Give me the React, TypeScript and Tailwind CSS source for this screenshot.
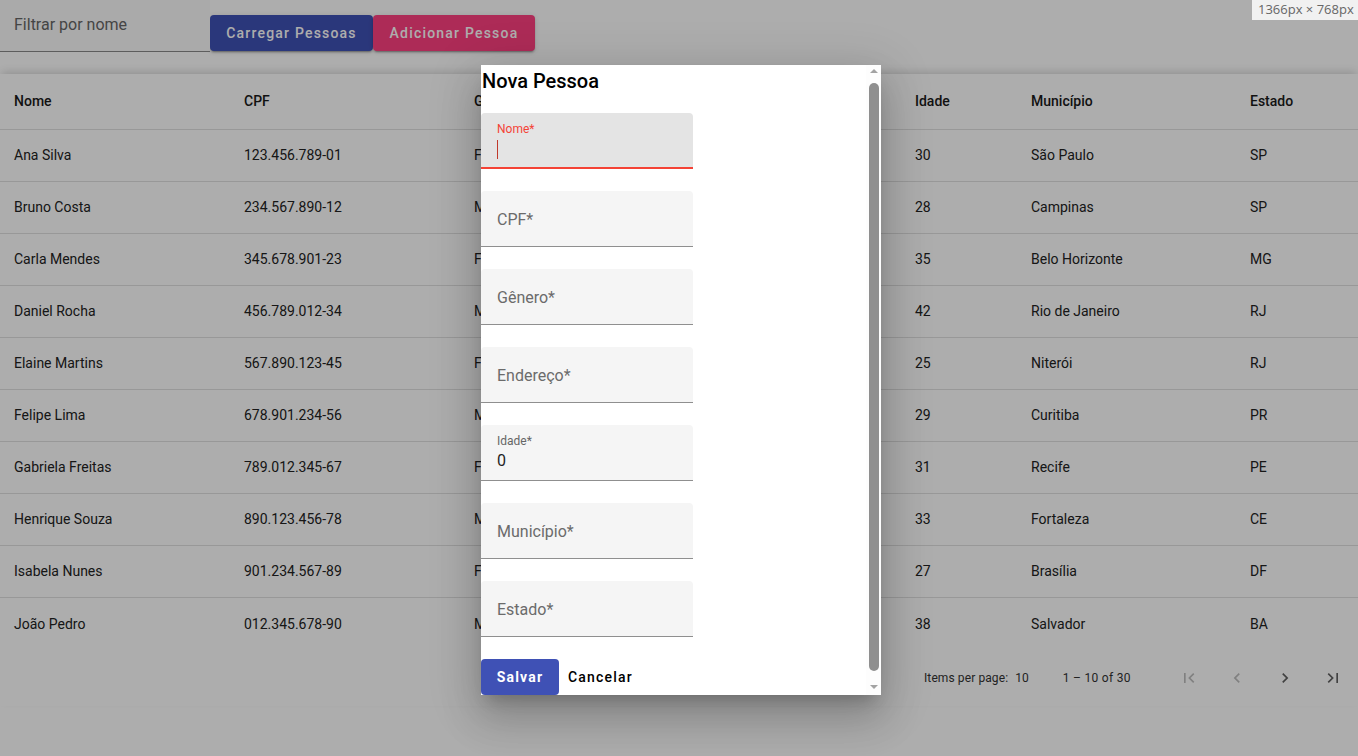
import React from "react";

const rows = [
  ["Ana Silva", "123.456.789-01", "Feminino", "Rua das Flores, 100", "30", "São Paulo", "SP"],
  ["Bruno Costa", "234.567.890-12", "Masculino", "Av. Brasil, 200", "28", "Campinas", "SP"],
  ["Carla Mendes", "345.678.901-23", "Feminino", "Rua Bahia, 300", "35", "Belo Horizonte", "MG"],
  ["Daniel Rocha", "456.789.012-34", "Masculino", "Rua Leblon, 400", "42", "Rio de Janeiro", "RJ"],
  ["Elaine Martins", "567.890.123-45", "Feminino", "Rua Icaraí, 500", "25", "Niterói", "RJ"],
  ["Felipe Lima", "678.901.234-56", "Masculino", "Rua XV, 600", "29", "Curitiba", "PR"],
  ["Gabriela Freitas", "789.012.345-67", "Feminino", "Rua Boa Vista, 700", "31", "Recife", "PE"],
  ["Henrique Souza", "890.123.456-78", "Masculino", "Av. Beira Mar, 800", "33", "Fortaleza", "CE"],
  ["Isabela Nunes", "901.234.567-89", "Feminino", "Eixo Monumental, 900", "27", "Brasília", "DF"],
  ["João Pedro", "012.345.678-90", "Masculino", "Rua Chile, 1000", "38", "Salvador", "BA"],
];

const headers = ["Nome", "CPF", "Gênero", "Endereço", "Idade", "Município", "Estado"];
const cols = "grid grid-cols-[230px_230px_126px_315px_116px_219px_108px] pl-[14px]";

function Field({ label, value, focused }: { label: string; value?: string; focused?: boolean }) {
  const floated = focused || value !== undefined;
  return (
    <div
      className={`relative h-[56px] w-[212px] rounded-t-[4px] ${
        focused ? "bg-[#e4e4e4] border-b-2 border-[#f44336]" : "bg-[#f5f5f5] border-b border-[#8f8f8f]"
      }`}
    >
      {floated ? (
        <>
          <div
            className={`absolute left-[16px] top-[9px] text-[12px] leading-[14px] ${
              focused ? "text-[#f44336]" : "text-[#666666]"
            }`}
          >
            {label}
          </div>
          {focused ? (
            <div className="absolute left-[16px] top-[27px] h-[19px] w-px bg-[#c0392b]" />
          ) : (
            <div className="absolute left-[16px] top-[26px] text-[16px] leading-[20px] text-[#1f1f1f]">{value}</div>
          )}
        </>
      ) : (
        <div className="absolute left-[16px] top-0 flex h-full items-center pt-[3px] text-[16px] text-[#6b6b6b]">
          {label}
        </div>
      )}
    </div>
  );
}

function PagIcon({ d, disabled }: { d: string; disabled?: boolean }) {
  return (
    <div className="flex h-[48px] w-[48px] shrink-0 items-center justify-center">
      <svg width="20" height="20" viewBox="0 0 24 24" fill={disabled ? "rgba(0,0,0,0.26)" : "rgba(0,0,0,0.62)"}>
        <path d={d} />
      </svg>
    </div>
  );
}

export default function App() {
  return (
    <div
      className="relative h-[756px] w-[1358px] overflow-hidden bg-white text-[#212121]"
      style={{ fontFamily: "Roboto, 'Noto Sans', sans-serif" }}
    >
      {/* top bar */}
      <div className="flex items-start">
        <div className="relative h-[52px] w-[210px] border-b border-[#8a8a8a] bg-[#fbfbfb]">
          <div className="absolute left-[14px] top-[14px] text-[16px] leading-[22px] text-[#666666]">Filtrar por nome</div>
        </div>
        <div className="mt-[15px] flex">
          <button className="h-[36px] w-[163px] rounded-[4px] bg-[#3f51b5] text-[14px] font-medium tracking-[1.2px] text-white shadow-[0_3px_1px_-2px_rgba(0,0,0,0.2),0_2px_2px_0_rgba(0,0,0,0.14),0_1px_5px_0_rgba(0,0,0,0.12)]">
            Carregar Pessoas
          </button>
          <button className="h-[36px] w-[162px] rounded-[4px] bg-[#ff4081] text-[14px] font-medium tracking-[1.2px] text-white shadow-[0_3px_1px_-2px_rgba(0,0,0,0.2),0_2px_2px_0_rgba(0,0,0,0.14),0_1px_5px_0_rgba(0,0,0,0.12)]">
            Adicionar Pessoa
          </button>
        </div>
      </div>

      {/* table */}
      <div className="mt-[22px] bg-white shadow-[0_-4px_8px_-2px_rgba(0,0,0,0.16)]">
        <div className={`${cols} h-[56px] items-center border-b border-[#e0e0e0] text-[14px] font-medium text-[#1a1a1a]`}>
          {headers.map((h) => (
            <div key={h}>{h}</div>
          ))}
        </div>
        {rows.map((r, i) => (
          <div
            key={i}
            className={`${cols} h-[52px] items-center text-[14px] text-[#222222] ${
              i < rows.length - 1 ? "border-b border-[#e0e0e0]" : ""
            }`}
          >
            {r.map((c, j) => (
              <div key={j} className="whitespace-nowrap">
                {c}
              </div>
            ))}
          </div>
        ))}
        <div className="flex h-[56px] items-center whitespace-nowrap text-[12px] text-[#333333]">
          <div className="ml-[924px] shrink-0 tracking-[0.1px]">Items per page:</div>
          <div className="ml-[7px] shrink-0">10</div>
          <div className="ml-[34px] shrink-0 tracking-[0.3px]">1 – 10 of 30</div>
          <div className="ml-[34px] flex shrink-0">
            <PagIcon disabled d="M18.41 16.59L13.82 12l4.59-4.59L17 6l-6 6 6 6zM6 6h2v12H6z" />
            <PagIcon disabled d="M15.41 7.41L14 6l-6 6 6 6 1.41-1.41L10.83 12z" />
            <PagIcon d="M10 6L8.59 7.41 13.17 12l-4.58 4.59L10 18l6-6z" />
            <PagIcon d="M5.59 7.41L10.18 12l-4.59 4.59L7 18l6-6-6-6zM16 6h2v12h-2z" />
          </div>
        </div>
      </div>

      {/* backdrop */}
      <div className="absolute inset-0 bg-black/[0.32]" />

      {/* dialog */}
      <div className="absolute left-[481px] top-[65px] flex h-[630px] w-[400px] overflow-hidden bg-white shadow-[0_11px_15px_-7px_rgba(0,0,0,0.2),0_24px_38px_3px_rgba(0,0,0,0.14),0_9px_46px_8px_rgba(0,0,0,0.12)]">
        <div className="flex flex-1 flex-col">
          <div className="h-[32px] pl-[1px] text-[20px] font-medium leading-[32px] text-black">Nova Pessoa</div>
          <div className="mt-[16px] flex flex-col gap-[22px]">
            <Field label="Nome*" focused />
            <Field label="CPF*" />
            <Field label="Gênero*" />
            <Field label="Endereço*" />
            <Field label="Idade*" value="0" />
            <Field label="Município*" />
            <Field label="Estado*" />
          </div>
          <div className="mt-[22px] flex items-center">
            <button className="h-[36px] w-[78px] rounded-[4px] bg-[#3f51b5] text-[14px] font-bold tracking-[1.2px] text-white">
              Salvar
            </button>
            <button className="ml-[9px] h-[36px] text-[14px] font-medium tracking-[1.2px] text-black">Cancelar</button>
          </div>
        </div>
        {/* scrollbar */}
        <div className="flex w-[15px] flex-col items-center bg-[#fdfdfd]">
          <div className="mt-[4px] h-0 w-0 border-x-[4px] border-b-[4px] border-x-transparent border-b-[#a3a3a3]" />
          <div className="mt-[10px] h-[588px] w-[10px] rounded-full bg-[#8f8f8f]" />
          <div className="mt-[14px] h-0 w-0 border-x-[4px] border-t-[4px] border-x-transparent border-t-[#a3a3a3]" />
        </div>
      </div>

      {/* size badge */}
      <div className="absolute right-0 top-0 flex h-[20px] w-[106px] items-center bg-[#f1f1f1] pl-[6px] text-[13px] text-[#666666]" style={{ fontFamily: "'Open Sans', 'Noto Sans', sans-serif" }}>
        1366px × 768px
      </div>
    </div>
  );
}
